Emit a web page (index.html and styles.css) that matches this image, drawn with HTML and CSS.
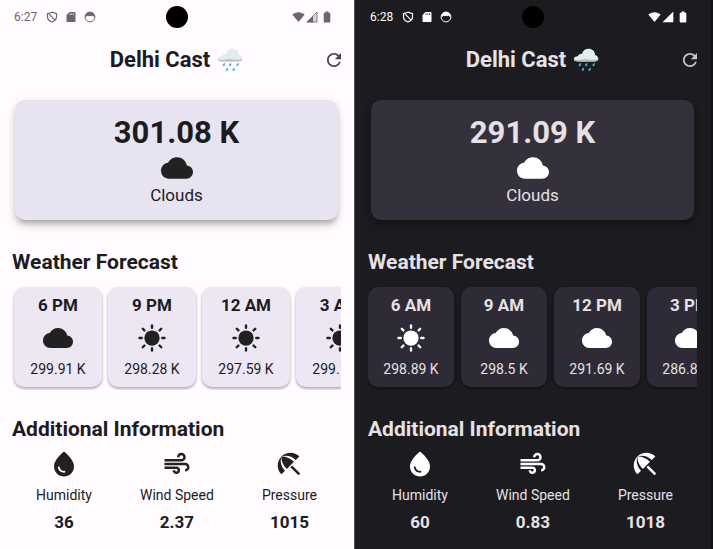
FILE: index.html
```html
<!DOCTYPE html>
<html lang="en">
<head>
<meta charset="utf-8">
<meta name="viewport" content="width=device-width, initial-scale=1">
<title>Delhi Cast</title>
<link rel="stylesheet" href="styles.css">
</head>
<body>
<svg class="sprite" aria-hidden="true">
  <symbol id="cloud" viewBox="0 0 24 24"><path d="M19.35 10.04C18.67 6.59 15.64 4 12 4 9.11 4 6.6 5.64 5.35 8.04 2.34 8.36 0 10.91 0 14c0 3.31 2.69 6 6 6h13c2.76 0 5-2.24 5-5 0-2.64-2.05-4.78-4.65-4.96z"/></symbol>
  <symbol id="sun" viewBox="0 0 24 24"><circle cx="12" cy="12" r="6.1"/><path d="M2 12h1.8M20.2 12H22M12 2v1.8M12 20.2V22M4.6 4.6l1.300 1.300M18.1 18.1l1.300 1.300M19.4 4.600l-1.300 1.300M5.900 18.100l-1.300 1.300" fill="none" stroke="currentColor" stroke-width="1.9" stroke-linecap="round"/></symbol>
  <symbol id="drop" viewBox="0 0 24 24"><path d="M12 2c-5.33 4.55-8 8.48-8 11.8 0 4.98 3.8 8.2 8 8.2s8-3.22 8-8.2c0-3.32-2.67-7.25-8-11.8zM7.83 14c.37 0 .67.26.74.62.41 2.22 2.28 2.98 3.64 2.87.43-.02.79.32.79.75 0 .4-.32.73-.72.75-2.13.13-4.62-1.09-5.19-4.12-.08-.45.28-.87.74-.87z"/></symbol>
  <symbol id="air" viewBox="0 0 24 24"><path d="M14.5 17c0 1.65-1.35 3-3 3s-3-1.35-3-3h2c0 .55.45 1 1 1s1-.45 1-1-.45-1-1-1H2v-2h9.5c1.65 0 3 1.35 3 3zM19 6.5C19 4.57 17.43 3 15.5 3S12 4.57 12 6.5h2c0-.83.67-1.5 1.5-1.5s1.5.67 1.5 1.5S16.33 8 15.5 8H2v2h13.5c1.93 0 3.5-1.57 3.5-3.5zm-.5 4.5H2v2h16.5c.83 0 1.5.67 1.5 1.5s-.67 1.5-1.5 1.5v2c1.93 0 3.5-1.57 3.5-3.5S20.43 11 18.5 11z"/></symbol>
  <symbol id="umbrella" viewBox="0 0 24 24"><path d="M13.127 14.56l1.43-1.43 6.44 6.443L19.57 21zm4.293-5.73l2.86-2.86c-3.95-3.95-10.35-3.96-14.3-.02 3.93-1.3 8.31-.25 11.44 2.88zM5.95 5.98c-3.94 3.95-3.93 10.35.02 14.3l2.86-2.86C5.7 14.29 4.65 9.91 5.95 5.98zm.02-.02l-.01.01c-.38 3.01 1.17 6.88 4.3 10.02l5.73-5.73c-3.13-3.13-7.01-4.68-10.02-4.3z"/></symbol>
  <symbol id="refresh" viewBox="4 4 16 16"><path d="M17.65 6.35C16.2 4.9 14.21 4 12 4c-4.42 0-7.99 3.58-7.99 8s3.57 8 7.99 8c3.73 0 6.84-2.55 7.73-6h-2.08c-.82 2.33-3.04 4-5.65 4-3.31 0-6-2.69-6-6s2.69-6 6-6c1.66 0 3.14.69 4.22 1.78L13 11h7V4l-2.35 2.35z"/></symbol>
  <symbol id="shield" viewBox="0 0 12 12"><path d="M6 1.200L1.500 2.700v3.100c0 2.500 1.900 4.400 4.500 5.200 2.600-.8 4.500-2.700 4.500-5.200V2.700zM3.200 3.200l5.600 5.600" fill="none" stroke="currentColor" stroke-width="1.200"/></symbol>
  <symbol id="sdcard" viewBox="0 0 12 12"><path fill-rule="evenodd" d="M4.500 1h5c.6 0 1 .4 1 1v8c0 .6-.4 1-1 1h-7c-.6 0-1-.4-1-1V4zM4.700 2.500v1.500h.8v-1.500zM6.400 2.500v1.500h.8v-1.500zM8.100 2.500v1.500h.8v-1.500z"/></symbol>
  <symbol id="face" viewBox="0 0 12 12"><circle cx="6" cy="6" r="4.900" fill="none" stroke="currentColor" stroke-width="1"/><path d="M1.200 5.200C1.600 2.600 3.500 1 6 1s4.400 1.600 4.800 4.200L9.500 5.800 8.700 4.800 7.500 5.300 6 4.800 4.500 5.300 3.300 4.800l-.8 1z"/></symbol>
  <symbol id="wifi" viewBox="0 0 13 12"><path d="M6.500 11L.3 3.600C2 2.100 4.100 1.200 6.500 1.200s4.500.9 6.200 2.400z"/></symbol>
  <symbol id="signal-full" viewBox="0 0 12 12"><path d="M11.300.6v10.700H.5z"/></symbol>
  <symbol id="signal-half" viewBox="0 0 12 12"><path d="M7.300 4.600v6.700H.5z"/><path d="M10.800 1.700v9H7.500V5z" class="signal-gap"/><path d="M.8 11.100L11 1v10.100z" fill="none" stroke="currentColor" stroke-width=".8"/></symbol>
  <symbol id="battery" viewBox="0 0 8 12"><path d="M2.500.5h3v1.200h1c.5 0 .8.3.8.8v8.200c0 .5-.3.8-.8.8h-5c-.5 0-.8-.3-.8-.8V2.500c0-.5.300-.8.800-.8h1z"/></symbol>
  <symbol id="rain" viewBox="0 0 26 24">
    <path fill="#e2ebee" d="M5.500 13.500C2.500 13.500.8 12.700.8 11c0-1.700 1.700-2.600 4-2.700C5.400 6.400 7 5.500 9 5.700 10 2.700 12.400.8 15.400.8c3.800 0 6.600 2.500 6.700 6.200 2 .6 3.200 2 3.200 3.700 0 1.800-1.500 2.800-4 2.800z"/>
    <path fill="#b4c2c8" d="M.8 11c1 .8 2.500 1 4.500 1 3 .1 4.500-1 7-1 2 0 2.800.8 5 .8 3.500 0 6.500.1 8-1.100 0 1.800-1.500 2.800-4 2.800H5.500C2.500 13.500.8 12.700.8 11z"/>
    <g fill="#3fb3ed"><path d="M8 14.700c-1.700 1.100-2.500 2-2.300 2.800.3 1 1.700.9 2.100-.1.200-.7.300-1.600.2-2.700zM14.300 14.700c-1.700 1.100-2.500 2-2.300 2.800.3 1 1.700.9 2.100-.1.200-.7.300-1.600.2-2.700zM21.700 14.700c-1.700 1.100-2.500 2-2.300 2.800.3 1 1.700.9 2.100-.1.200-.7.300-1.600.2-2.700zM11 19.500c-1.700 1.100-2.500 2-2.300 2.800.3 1 1.700.9 2.100-.1.200-.7.300-1.600.2-2.700zM17.700 19.500c-1.700 1.100-2.500 2-2.300 2.800.3 1 1.700.9 2.100-.1.200-.7.300-1.600.2-2.700z"/></g>
  </symbol>
</svg>
<main class="screens">
  <section class="screen light">
    <div class="status">
      <div class="status-left"><span>6:27</span><svg><use href="#shield"/></svg><svg><use href="#sdcard"/></svg><svg><use href="#face"/></svg></div>
      <div class="camera"></div>
      <div class="status-right"><svg class="wifi"><use href="#wifi"/></svg><svg><use href="#signal-half"/></svg><svg class="battery"><use href="#battery"/></svg></div>
    </div>
    <header class="appbar">
      <h1>Delhi Cast <svg class="rain"><use href="#rain"/></svg></h1>
      <button type="button" aria-label="Refresh"><svg><use href="#refresh"/></svg></button>
    </header>
    <article class="hero">
      <strong>301.08 K</strong>
      <svg><use href="#cloud"/></svg>
      <span>Clouds</span>
    </article>
    <h2 class="forecast-title">Weather Forecast</h2>
    <div class="forecast">
      <article class="hour"><h3>6 PM</h3><svg><use href="#cloud"/></svg><span>299.91 K</span></article>
      <article class="hour"><h3>9 PM</h3><svg><use href="#sun"/></svg><span>298.28 K</span></article>
      <article class="hour"><h3>12 AM</h3><svg><use href="#sun"/></svg><span>297.59 K</span></article>
      <article class="hour"><h3>3 AM</h3><svg><use href="#sun"/></svg><span>299.16 K</span></article>
    </div>
    <h2 class="info-title">Additional Information</h2>
    <div class="info">
      <div class="fact"><svg><use href="#drop"/></svg><span>Humidity</span><strong>36</strong></div>
      <div class="fact"><svg><use href="#air"/></svg><span>Wind Speed</span><strong>2.37</strong></div>
      <div class="fact"><svg><use href="#umbrella"/></svg><span>Pressure</span><strong>1015</strong></div>
    </div>
  </section>
  <section class="screen dark">
    <div class="status">
      <div class="status-left"><span>6:28</span><svg><use href="#shield"/></svg><svg><use href="#sdcard"/></svg><svg><use href="#face"/></svg></div>
      <div class="camera"></div>
      <div class="status-right"><svg class="wifi"><use href="#wifi"/></svg><svg><use href="#signal-full"/></svg><svg class="battery"><use href="#battery"/></svg></div>
    </div>
    <header class="appbar">
      <h1>Delhi Cast <svg class="rain"><use href="#rain"/></svg></h1>
      <button type="button" aria-label="Refresh"><svg><use href="#refresh"/></svg></button>
    </header>
    <article class="hero">
      <strong>291.09 K</strong>
      <svg><use href="#cloud"/></svg>
      <span>Clouds</span>
    </article>
    <h2 class="forecast-title">Weather Forecast</h2>
    <div class="forecast">
      <article class="hour"><h3>6 AM</h3><svg><use href="#sun"/></svg><span>298.89 K</span></article>
      <article class="hour"><h3>9 AM</h3><svg><use href="#cloud"/></svg><span>298.5 K</span></article>
      <article class="hour"><h3>12 PM</h3><svg><use href="#cloud"/></svg><span>291.69 K</span></article>
      <article class="hour"><h3>3 PM</h3><svg><use href="#cloud"/></svg><span>286.85 K</span></article>
    </div>
    <h2 class="info-title">Additional Information</h2>
    <div class="info">
      <div class="fact"><svg><use href="#drop"/></svg><span>Humidity</span><strong>60</strong></div>
      <div class="fact"><svg><use href="#air"/></svg><span>Wind Speed</span><strong>0.83</strong></div>
      <div class="fact"><svg><use href="#umbrella"/></svg><span>Pressure</span><strong>1018</strong></div>
    </div>
  </section>
</main>
</body>
</html>
```
FILE: styles.css
```css
* { box-sizing: border-box; }

body {
  margin: 0;
  font-family: Roboto, "Liberation Sans", sans-serif;
}

h1, h2, h3 { margin: 0; }

svg {
  display: block;
  fill: currentColor;
}

.sprite {
  position: absolute;
  width: 0;
  height: 0;
}

.screens {
  display: grid;
  grid-template-columns: 354fr 359fr;
  min-height: 100vh;
}

.screen {
  min-width: 0;
  background: var(--bg);
  color: var(--text);
}

.light {
  --bg: #fffbff;
  --text: #1c1b1f;
  --icon: #212121;
  --status: #69676b;
  --action: #49454f;
  --card: #e8e3f0;
  --card-small: #ece7f2;
  --hour-width: 88px;
  --hour-gap: 6px;
  --hour-start: 2px;
  --signal-gap: #d5d2d6;
  padding: 0 13px 0 12px;
}

.dark {
  --bg: #1c1b1f;
  --text: #e6e1e5;
  --icon: #ffffff;
  --status: #ffffff;
  --action: #cac4d0;
  --card: #35313c;
  --card-small: #2f2b36;
  --hour-width: 86px;
  --hour-gap: 7px;
  --hour-start: 0px;
  padding: 0 14px 0 13px;
  border-left: 1px solid #55545a;
  border-right: 2px solid #10141a;
}

.status {
  display: grid;
  grid-template-columns: 1fr auto 1fr;
  align-items: center;
  height: 34px;
  color: var(--status);
  font-size: 12px;
}

.status-left, .status-right {
  display: flex;
  align-items: center;
}

.status-left {
  gap: 7px;
  padding-left: 2px;
}

.status-left span { margin-right: 2px; }

.status-right {
  justify-content: flex-end;
  padding-right: 10px;
}

.status svg {
  width: 12px;
  height: 12px;
}

.status .wifi {
  width: 13px;
  margin-right: 1px;
}

.status .battery {
  width: 8px;
  margin-left: 5px;
}

.signal-gap { fill: var(--signal-gap); }

.camera {
  width: 22px;
  height: 22px;
  border-radius: 50%;
  background: #000;
}

.appbar {
  display: grid;
  grid-template-columns: 1fr auto 1fr;
  align-items: center;
  height: 52px;
}

.appbar h1 {
  grid-column: 2;
  display: flex;
  align-items: center;
  gap: 7px;
  font-size: 22px;
  line-height: 28px;
}

.rain {
  width: 26px;
  height: 24px;
}

.appbar button {
  justify-self: end;
  padding: 0;
  border: 0;
  background: none;
  color: var(--action);
}

.appbar button svg {
  width: 14px;
  height: 14px;
}

.hero {
  display: flex;
  flex-direction: column;
  align-items: center;
  gap: 1px;
  margin: 14px 3px 0;
  padding: 15px;
  border-radius: 10px;
  background: var(--card);
  box-shadow: 0 5px 5px -2px rgb(0 0 0 / 20%), 0 6px 10px rgb(0 0 0 / 14%), 0 1px 8px rgb(0 0 0 / 6%);
}

.hero strong {
  font-size: 31px;
  line-height: 36px;
}

.hero svg {
  width: 32px;
  height: 32px;
  color: var(--icon);
}

.hero span {
  font-size: 17px;
  line-height: 20px;
}

h2 {
  font-size: 21px;
  line-height: 24px;
}

.forecast-title { margin-top: 30px; }

.info-title { margin-top: 27px; }

.forecast {
  display: flex;
  gap: var(--hour-gap);
  margin-top: 10px;
  padding: 3px 0 3px var(--hour-start);
  overflow: hidden;
}

.hour {
  display: flex;
  flex: 0 0 var(--hour-width);
  flex-direction: column;
  align-items: center;
  padding: 8px 0 9px;
  border-radius: 10px;
  background: var(--card-small);
  box-shadow: 0 2px 3px rgb(0 0 0 / 24%), 0 1px 3px rgb(0 0 0 / 12%);
}

.hour h3 {
  font-size: 17px;
  line-height: 20px;
}

.hour svg {
  width: 30px;
  height: 30px;
  margin: 8px 0 7px;
  color: var(--icon);
}

.hour span {
  font-size: 14px;
  line-height: 18px;
}

.info {
  display: flex;
  justify-content: space-around;
  margin-top: 8px;
}

.fact {
  display: flex;
  flex-direction: column;
  align-items: center;
}

.fact svg {
  width: 30px;
  height: 30px;
  color: var(--icon);
}

.fact span {
  margin: 7px 0 8px;
  font-size: 14px;
  line-height: 18px;
}

.fact strong {
  font-size: 17px;
  line-height: 20px;
}
```
